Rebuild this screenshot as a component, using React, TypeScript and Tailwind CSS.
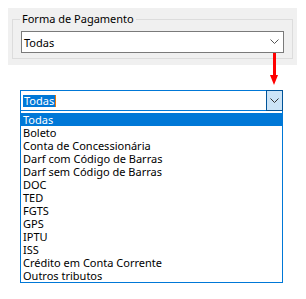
const options = [
  "Todas",
  "Boleto",
  "Conta de Concessionária",
  "Darf com Código de Barras",
  "Darf sem Código de Barras",
  "DOC",
  "TED",
  "FGTS",
  "GPS",
  "IPTU",
  "ISS",
  "Crédito em Conta Corrente",
  "Outros tributos",
];

function Chevron({ className }: { className?: string }) {
  return (
    <svg width="9" height="6" viewBox="0 0 9 6" className={className}>
      <path d="M0.5 0.5 L4.5 4.5 L8.5 0.5" fill="none" stroke="currentColor" strokeWidth="1" />
    </svg>
  );
}

export default function App() {
  return (
    <div
      className="relative w-[306px] h-[299px] bg-white pt-2 text-[11px] text-black leading-none"
      style={{ fontFamily: '"Segoe UI", "Noto Sans", sans-serif' }}
    >
      {/* painel superior */}
      <div className="ml-2 w-[289px] h-[57px] bg-[#f0f0f0] pt-[11px] pl-1">
        <div className="relative w-[281px] h-[40px] border border-[#dcdcdc]">
          <span className="absolute left-[7px] top-[-9px] bg-[#f0f0f0] px-[2px] leading-[16px]">
            Forma de Pagamento
          </span>
          <div className="ml-2 mt-[11px] w-[263px] h-[22px] bg-white border border-[#7a7a7a] flex items-center justify-between pl-[2px] pr-[4px]">
            <span>Todas</span>
            <Chevron className="text-[#555]" />
          </div>
        </div>
      </div>

      {/* seta */}
      <div className="absolute left-[270px] top-[53px] w-[8px] flex flex-col items-center">
        <div className="w-[3px] h-[22px] bg-[#f00]" />
        <svg width="8" height="10" viewBox="0 0 8 10" className="block">
          <path d="M0 0 H8 L4 10 Z" fill="#f00" />
        </svg>
      </div>

      {/* combo aberto */}
      <div className="ml-5 mt-[25px] w-[263px]">
        <div className="h-[21px] border border-[#0078d7] flex items-stretch">
          <div className="flex-1 flex items-center pl-[2px]">
            <span className="bg-[#0078d7] text-white px-[1px] leading-[12px] h-[12px]">Todas</span>
            <span className="w-px h-[12px] bg-[#f07800]" />
          </div>
          <div className="w-[17px] bg-[#cce4f7] border border-[#005499] -m-px flex items-center justify-center">
            <Chevron className="text-[#333]" />
          </div>
        </div>
        <div className="border-x border-b border-[#0078d7] pt-[2px]">
          {options.map((o, i) => (
            <div
              key={o}
              className={
                "h-[13px] leading-[13px] pl-[2px] whitespace-nowrap " +
                (i === 0 ? "bg-[#0078d7] text-white" : "")
              }
            >
              {o}
            </div>
          ))}
        </div>
      </div>
    </div>
  );
}
